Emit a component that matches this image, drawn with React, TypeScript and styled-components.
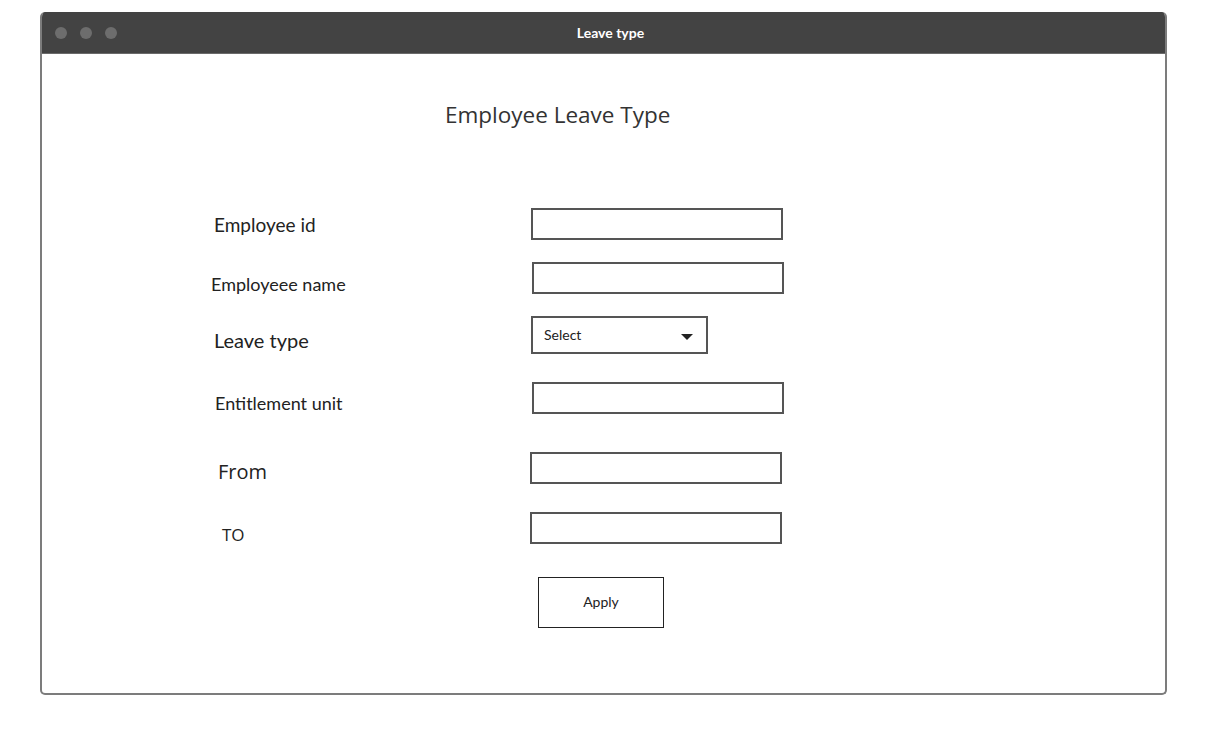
import React from 'react';
import styled, { createGlobalStyle } from 'styled-components';

const GlobalStyle = createGlobalStyle`
  html, body {
    margin: 0;
    padding: 0;
    background: #ffffff;
  }
  body {
    font-family: Lato, "Liberation Sans", sans-serif;
    color: #2b2b2b;
  }
`;

const Page = styled.div`
  width: 1214px;
  height: 748px;
  padding: 12px 0 0 40px;
  box-sizing: border-box;
`;

const Window = styled.div`
  width: 1127px;
  height: 683px;
  box-sizing: border-box;
  border: 2px solid #7c7c7c;
  border-top: none;
  border-radius: 5px;
  overflow: hidden;
  display: flex;
  flex-direction: column;
`;

const TitleBar = styled.div`
  height: 41px;
  background: #434343;
  border-bottom: 1px solid #6a6a6a;
  display: flex;
  align-items: center;
  position: relative;
  padding-left: 13px;
  gap: 13px;
  flex-shrink: 0;
`;

const Dot = styled.span`
  width: 12px;
  height: 12px;
  border-radius: 50%;
  background: #6d6d6d;
`;

// title sits a little right of the window centre, as in the mockup
const WindowTitle = styled.div`
  position: absolute;
  left: 14px;
  right: 0;
  text-align: center;
  color: #ffffff;
  font-family: Lato, sans-serif;
  font-weight: 700;
  font-size: 14px;
  pointer-events: none;
`;

const Body = styled.div`
  flex: 1;
  padding-top: 47px;
`;

const Heading = styled.h1`
  margin: 0 0 0 403px;
  font-family: "Open Sans", sans-serif;
  font-weight: 400;
  font-size: 22.5px;
  line-height: 28px;
  color: #333333;
`;

const Form = styled.div`
  margin-top: 79px;
  padding-left: 169px;
  display: flex;
  flex-direction: column;
`;

const Row = styled.div<{ $top: number }>`
  display: grid;
  grid-template-columns: 320px 1fr;
  align-items: start;
  margin-top: ${p => p.$top}px;
`;

const Label = styled.label<{ $indent: number; $shift: number; $size: number; $font?: string }>`
  padding-left: ${p => p.$indent}px;
  padding-top: ${p => p.$shift}px;
  font-family: ${p => p.$font || 'Lato, sans-serif'};
  font-size: ${p => p.$size}px;
  line-height: 18px;
  color: #222222;
  white-space: nowrap;
`;

const Field = styled.div<{ $offset: number }>`
  margin-left: ${p => p.$offset}px;
  width: 252px;
  height: 32px;
  box-sizing: border-box;
  border: 2px solid #555555;
  background: #ffffff;
`;

const SelectBox = styled.div`
  width: 177px;
  height: 38px;
  box-sizing: border-box;
  border: 2px solid #555555;
  display: flex;
  align-items: center;
  justify-content: space-between;
  padding: 0 13px 2px 11px;
  font-family: Lato, sans-serif;
  font-size: 14px;
  color: #222222;
`;

const Caret = styled.span`
  width: 0;
  height: 0;
  margin-top: 5px;
  border-left: 6px solid transparent;
  border-right: 6px solid transparent;
  border-top: 6px solid #222222;
`;

const ApplyButton = styled.button`
  margin-left: 7px;
  width: 126px;
  height: 51px;
  padding: 0 0 2px;
  background: #ffffff;
  border: 1px solid #222222;
  font-family: Lato, sans-serif;
  font-size: 14px;
  color: #222222;
  cursor: pointer;
`;

export default function App() {
  return (
    <Page>
      <GlobalStyle />
      <Window>
        <TitleBar>
          <Dot />
          <Dot />
          <Dot />
          <WindowTitle>Leave type</WindowTitle>
        </TitleBar>
        <Body>
          <Heading>Employee Leave Type</Heading>
          <Form>
            <Row $top={0}>
              <Label $indent={3} $shift={8} $size={19}>Employee id</Label>
              <Field $offset={0} />
            </Row>
            <Row $top={22}>
              <Label $indent={0} $shift={13} $size={18}>Employeee name</Label>
              <Field $offset={1} />
            </Row>
            <Row $top={22}>
              <Label $indent={3} $shift={15} $size={20}>Leave type</Label>
              <SelectBox>
                Select
                <Caret />
              </SelectBox>
            </Row>
            <Row $top={28}>
              <Label $indent={4} $shift={12} $size={18}>Entitlement unit</Label>
              <Field $offset={1} />
            </Row>
            <Row $top={38}>
              <Label $indent={7} $shift={11} $size={20} $font='"Open Sans", sans-serif'>From</Label>
              <Field $offset={-1} />
            </Row>
            <Row $top={28}>
              <Label $indent={11} $shift={14} $size={17} $font='"Open Sans", sans-serif'>TO</Label>
              <Field $offset={-1} />
            </Row>
            <Row $top={33}>
              <span />
              <ApplyButton>Apply</ApplyButton>
            </Row>
          </Form>
        </Body>
      </Window>
    </Page>
  );
}
